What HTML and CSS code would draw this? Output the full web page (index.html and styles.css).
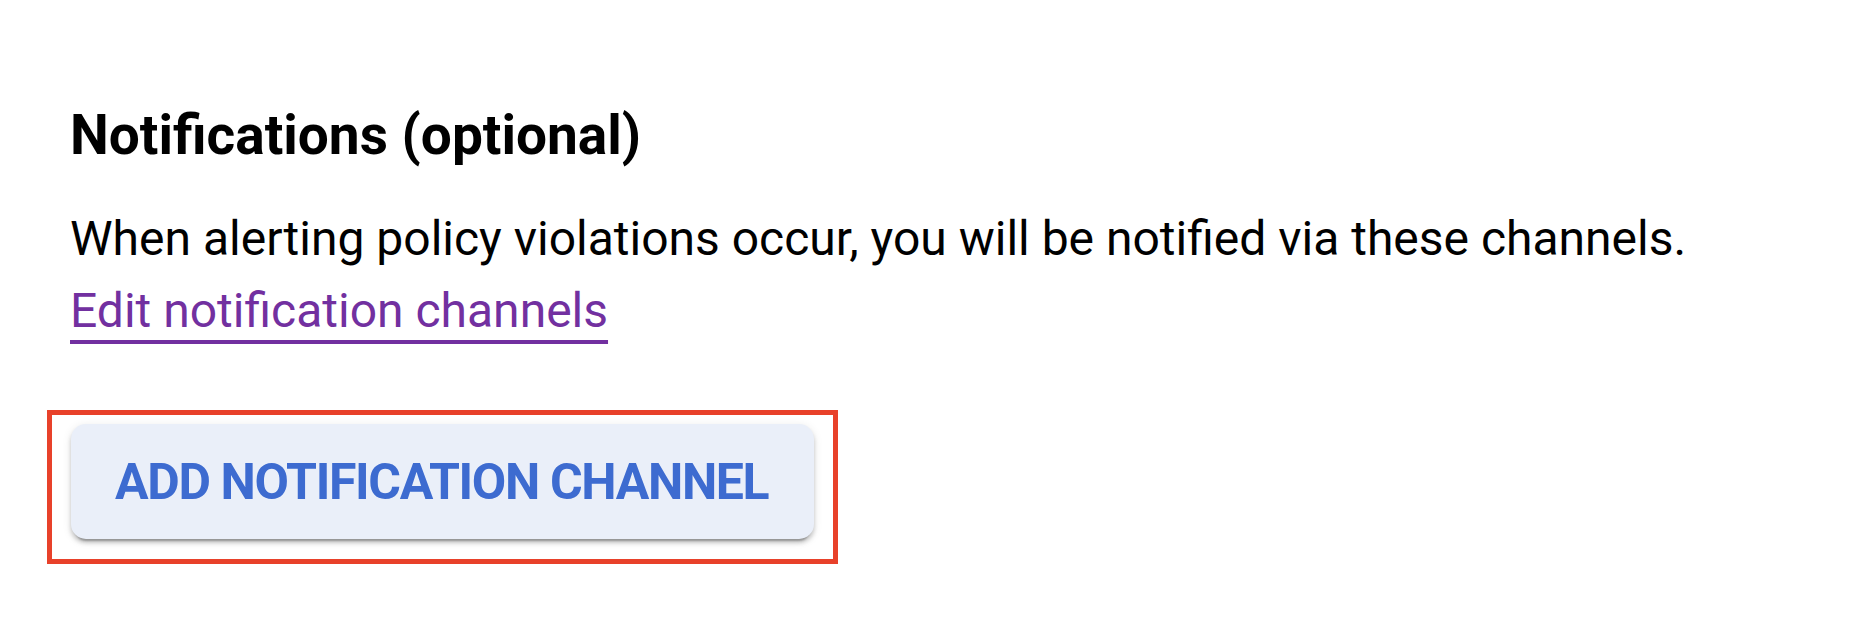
FILE: index.html
```html
<!DOCTYPE html>
<html lang="en">
<head>
<meta charset="utf-8">
<title>Notifications</title>
<link rel="stylesheet" href="styles.css">
</head>
<body>
<section class="panel">
  <h2 class="title">Notifications (optional)</h2>
  <p class="desc">When alerting policy violations occur, you will be notified via these channels.<br><a class="link" href="#">Edit notification channels</a></p>
  <div class="highlight">
    <button class="btn" type="button">ADD NOTIFICATION CHANNEL</button>
  </div>
</section>
</body>
</html>
```

FILE: styles.css
```css
html, body {
  margin: 0;
  padding: 0;
  background: #ffffff;
}

body {
  font-family: Roboto, "Liberation Sans", Arial, sans-serif;
  color: #000000;
}

.panel {
  padding: 103px 0 0 70px;
}

.title {
  margin: 0;
  font-size: 55px;
  line-height: 64px;
  font-weight: 700;
}

.desc {
  margin: 36px 0 0 0;
  font-size: 48px;
  line-height: 72px;
  font-weight: 400;
}

.link {
  color: #7230a0;
  text-decoration: underline;
  text-decoration-thickness: 4px;
  text-underline-offset: 13px;
}

.highlight {
  display: inline-block;
  margin: 63px 0 0 -23px;
  padding: 9px 19px 20px 19px;
  border: 5px solid #e8412a;
}

.btn {
  display: flex;
  align-items: center;
  height: 115px;
  padding: 0 46px 0 44px;
  border: none;
  border-radius: 15px;
  background: #eaeff9;
  color: #3d6bd0;
  font-family: Roboto, "Liberation Sans", Arial, sans-serif;
  font-size: 50px;
  font-weight: 700;
  letter-spacing: -1.35px;
  box-shadow: 0 4px 4px rgba(0, 0, 0, 0.18), 0 6px 2px -4px rgba(0, 0, 0, 0.25), 0 2px 10px rgba(0, 0, 0, 0.10);
}
```
